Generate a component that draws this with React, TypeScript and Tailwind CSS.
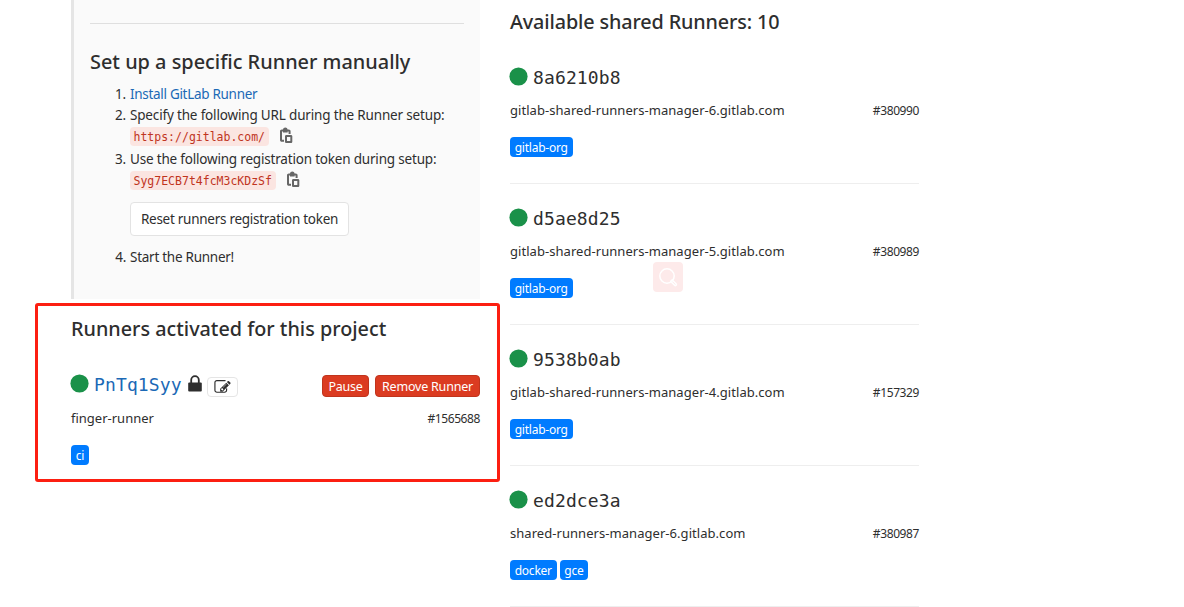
import type { ReactNode } from "react";

const MONO = "font-['DejaVu_Sans_Mono',monospace]";

type Runner = { token: string; name: string; id: string; tags: string[] };

const sharedRunners: Runner[] = [
  { token: "8a6210b8", name: "gitlab-shared-runners-manager-6.gitlab.com", id: "#380990", tags: ["gitlab-org"] },
  { token: "d5ae8d25", name: "gitlab-shared-runners-manager-5.gitlab.com", id: "#380989", tags: ["gitlab-org"] },
  { token: "9538b0ab", name: "gitlab-shared-runners-manager-4.gitlab.com", id: "#157329", tags: ["gitlab-org"] },
  { token: "ed2dce3a", name: "shared-runners-manager-6.gitlab.com", id: "#380987", tags: ["docker", "gce"] },
];

function ClipboardIcon() {
  return (
    <svg width="14" height="17" viewBox="0 0 14 17" className="mb-[2px] shrink-0" fill="#666">
      <path d="M1.800 2.500H3C3.200 1.300 4 .500 5.300 .500S7.400 1.300 7.600 2.500h1.200c1 0 1.800.800 1.800 1.800V7H8.600V4.500H7.600V5.500H3V4.500H2v8.200h2v2H1.800C.800 14.700 0 13.900 0 12.900V4.300c0-1 .800-1.800 1.800-1.800z" />
      <path fillRule="evenodd" d="M6.300 8H11c.700 0 1.300.600 1.300 1.300v5.400c0 .700-.600 1.300-1.300 1.300H6.300C5.600 16 5 15.400 5 14.700V9.300C5 8.600 5.600 8 6.300 8zM7 10v4h3.300v-4z" />
    </svg>
  );
}

function LockIcon() {
  return (
    <svg width="14" height="17" viewBox="0 0 14 17" className="shrink-0">
      <path d="M3.200 8V5a3.800 3.800 0 0 1 7.600 0v3" fill="none" stroke="#2e2e2e" strokeWidth="1.800" />
      <rect x="0.200" y="7.400" width="13.600" height="9.200" rx="1" fill="#2e2e2e" />
    </svg>
  );
}

function EditIcon() {
  return (
    <svg width="17" height="14" viewBox="0 0 1792 1536" fill="#2e2e2e">
      <path d="M888 1056l116-116-152-152-116 116v56h96v96h56zM1328 336q-16-16-33 1L945 687q-17 17-1 33t33-1l350-350q17-17 1-33zM1408 834v190q0 119-84.500 203.500T1120 1312H288q-119 0-203.500-84.500T0 1024V192Q0 73 84.500-11.500T288-96h832q63 0 117 25 15 7 18 23 3 17-9 29l-49 49q-14 14-32 8-23-6-45-6H288q-66 0-113 47t-47 113v832q0 66 47 113t113 47h832q66 0 113-47t47-113V898q0-13 9-22l64-64q15-15 35-7t20 29zM1312 192l288 288-672 672H640V864zM1756 324l-92 92-288-288 92-92q28-28 68-28t68 28l152 152q28 28 28 68t-28 68z" transform="translate(0 96)" />
    </svg>
  );
}

function Dot() {
  return (
    <svg width="19" height="19" viewBox="0 0 19 19" className="shrink-0">
      <circle cx="9.500" cy="9.500" r="9.100" fill="#1a9149" />
    </svg>
  );
}

function Tag({ children }: { children: ReactNode }) {
  return (
    <span className="flex h-5 items-center rounded-[4px] bg-[#007bff] pr-[4.800px] pl-[4.700px] pt-px text-[12px] leading-5 tracking-[-0.23px] text-white">
      {children}
    </span>
  );
}

function Code({ children }: { children: ReactNode }) {
  return (
    <code className={`${MONO} flex h-[19px] items-center rounded-[4px] bg-[#fbe5e1] pr-[4px] pl-[3.500px] pt-px text-[11.5px] tracking-normal text-[#c0341d]`}>
      {children}
    </code>
  );
}

function SharedRunner({ runner }: { runner: Runner }) {
  return (
    <li className="flex h-[141px] flex-col border-b border-[#eee]">
      <div className="mt-6 flex h-[18px] items-center gap-[5px]">
        <span className="-ml-px flex"><Dot /></span>
        <span className={`${MONO} pt-[3px] text-[18px] leading-none tracking-[0.13px]`}>{runner.token}</span>
      </div>
      <div className="mt-[16px] flex h-5 items-center justify-between">
        <span className="text-[13px] tracking-[0.05px]">{runner.name}</span>
        <span className="text-[12px] tracking-[-0.4px]">{runner.id}</span>
      </div>
      <div className="mt-[16px] flex gap-[3px]">
        {runner.tags.map((t) => <Tag key={t}>{t}</Tag>)}
      </div>
    </li>
  );
}

export default function App() {
  return (
    <main className="relative flex h-[607px] w-[1184px] gap-[30px] overflow-hidden bg-white pl-[71px] font-['Noto_Sans',sans-serif] text-[#2e2e2e]">
      <section className="w-[409px] shrink-0">
        <div className="h-[299px] border-l-[3px] border-[#e5e5e5] bg-[#fafafa] pr-4 pl-4">
          <div className="h-6 border-b border-[#dfdfdf]" />
          <h4 className="mt-6 h-7 text-[19.9px] leading-7 font-medium whitespace-nowrap">Set up a specific Runner manually</h4>
          <ol className="mt-[7px] text-[13.5px] leading-[22px] tracking-[-0.17px] whitespace-nowrap">
            <li className="flex h-[21px]"><span className="w-10 pr-1 text-right">1.</span><a className="tracking-[-0.3px] text-[#1b69b6]">Install GitLab Runner</a></li>
            <li className="flex h-[44px]">
              <span className="w-10 pr-1 text-right">2.</span>
              <div>
                <div>Specify the following URL during the Runner setup:</div>
                <div className="flex items-center gap-[11px] pt-px"><Code>https://gitlab.com/</Code><ClipboardIcon /></div>
              </div>
            </li>
            <li className="flex h-[98px]">
              <span className="w-10 pr-1 text-right">3.</span>
              <div>
                <div className="tracking-[-0.19px]">Use the following registration token during setup:</div>
                <div className="flex items-center gap-[11px] pt-px"><Code>Syg7ECB7t4fcM3cKDzSf</Code><ClipboardIcon /></div>
                <button className="mt-[12px] flex h-[34px] w-[219px] items-center justify-center rounded-[4px] border border-[#e3e3e3] bg-white tracking-[-0.27px]">Reset runners registration token</button>
              </div>
            </li>
            <li className="flex tracking-[-0.26px]"><span className="w-10 pr-1 text-right">4.</span>Start the Runner!</li>
          </ol>
        </div>
        <h4 className="mt-4 h-7 text-[19.8px] leading-7 font-medium">Runners activated for this project</h4>
        <div className="mt-8 flex h-[22px] items-center">
          <span className="-ml-px flex pb-[5px]"><Dot /></span>
          <span className={`${MONO} ml-[5px] pb-[3px] text-[18px] leading-none tracking-[0.13px] text-[#1b69b6]`}>PnTq1Syy</span>
          <span className="ml-[6px] flex pb-[5px]"><LockIcon /></span>
          <button className="mt-px ml-[5px] flex h-5 w-[31px] items-center justify-center rounded-[4px] border border-[#e5e5e5]"><EditIcon /></button>
          <button className="ml-auto flex h-[22px] w-[47px] items-center justify-center rounded-[4px] border border-[#c0341d] bg-[#db3b21] pt-[2px] text-[12.5px] tracking-[-0.3px] text-white">Pause</button>
          <button className="ml-[6px] flex h-[22px] w-[105px] items-center justify-center rounded-[4px] border border-[#c0341d] bg-[#db3b21] pt-[2px] text-[12.5px] tracking-[-0.2px] whitespace-nowrap text-white">Remove Runner</button>
        </div>
        <div className="mt-[12px] flex h-5 items-center justify-between">
          <span className="text-[13px]">finger-runner</span>
          <span className="text-[12px] tracking-[-0.4px]">#1565688</span>
        </div>
        <div className="mt-[16px] flex"><Tag>ci</Tag></div>
      </section>

      <section className="w-[409px] shrink-0">
        <h4 className="mt-2 h-[35px] text-[19.8px] leading-7 font-medium tracking-[-0.13px]">Available shared Runners: 10</h4>
        <ul>
          {sharedRunners.map((r) => <SharedRunner key={r.token} runner={r} />)}
        </ul>
      </section>

      <div className="pointer-events-none absolute top-[303px] left-[35px] h-[179px] w-[465px] rounded-[3px] border-[3px] border-[#fc1f11]" />
      <div className="absolute top-[262px] left-[653px] flex size-[30px] items-center justify-center rounded-[4px] bg-[#fdeaea]">
        <svg width="20" height="20" viewBox="0 0 20 20" fill="none" stroke="#fff" strokeLinecap="round">
          <circle cx="9" cy="9" r="7.200" strokeWidth="1.500" />
          <path d="M14 14.200l3.300 3.300" strokeWidth="3.600" />
          <path d="M14.700 14.900l2.400 2.400" stroke="#fdeaea" strokeWidth="1" />
        </svg>
      </div>
    </main>
  );
}
